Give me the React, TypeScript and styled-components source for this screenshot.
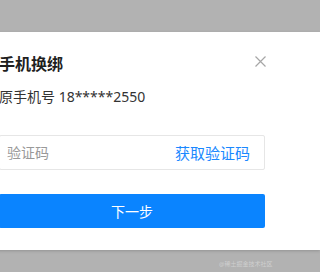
import React from 'react'
import styled, { createGlobalStyle } from 'styled-components'

const GlobalStyle = createGlobalStyle`
  html, body {
    margin: 0;
    padding: 0;
    min-height: 100%;
    overflow: hidden;
    background: #b2b2b2;
    font-family: "Noto Sans", "Noto Sans CJK SC", sans-serif;
  }
`

const Page = styled.div`
  position: relative;
  height: 100vh;
  padding-top: 32px;
  box-sizing: border-box;
  overflow: hidden;
`

const Modal = styled.div`
  margin-left: -17px;
  padding: 21px 0 22px 16px;
  background: #fff;
  box-shadow: 0 1px 3px rgba(0, 0, 0, 0.18);
`

const Content = styled.div`
  position: relative;
  width: 266px;
  display: flex;
  flex-direction: column;
`

const Title = styled.h2`
  margin: 0;
  font-size: 16px;
  line-height: 22px;
  font-weight: 700;
  color: #1f1f1f;
`

const Close = styled.button`
  position: absolute;
  top: 2px;
  right: -2px;
  width: 13px;
  height: 13px;
  padding: 0;
  border: 0;
  background: none;
  display: flex;
  align-items: center;
  justify-content: center;
`

const Phone = styled.p`
  margin: 12px 0 0;
  font-size: 14px;
  line-height: 20px;
  color: #333;
`

const Field = styled.div`
  margin-top: 28px;
  height: 35px;
  box-sizing: border-box;
  border: 1px solid #e6e6e6;
  border-radius: 2px;
  display: flex;
  align-items: center;
  justify-content: space-between;
  padding: 0 14px 0 7px;
`

const Input = styled.input`
  flex: 1;
  min-width: 0;
  border: 0;
  outline: none;
  font-family: inherit;
  font-size: 14px;
  color: #333;
  padding: 0;
  &::placeholder {
    color: #999;
  }
`

const SendCode = styled.span`
  font-size: 15px;
  color: #1a88ff;
  white-space: nowrap;
`

const NextButton = styled.button`
  margin-top: 24px;
  height: 34px;
  border: 0;
  border-radius: 2px;
  background: #0a84ff;
  color: #fff;
  font-family: inherit;
  font-size: 14px;
`

const Watermark = styled.span`
  position: absolute;
  left: 219px;
  top: 260px;
  font-size: 6px;
  line-height: 8px;
  color: #cfcfcf;
  white-space: nowrap;
`

const App: React.FC = () => {
  return (
    <>
      <GlobalStyle />
      <Page>
        <Modal>
          <Content>
            <Title>手机换绑</Title>
            <Close aria-label="关闭">
              <svg width="11" height="11" viewBox="0 0 11 11">
                <path d="M0.5 0.5 L10.5 10.5 M10.5 0.5 L0.5 10.5" stroke="#a6a6a6" strokeWidth="1.2" />
              </svg>
            </Close>
            <Phone>原手机号 18*****2550</Phone>
            <Field>
              <Input placeholder="验证码" />
              <SendCode>获取验证码</SendCode>
            </Field>
            <NextButton>下一步</NextButton>
          </Content>
        </Modal>
        <Watermark>@稀土掘金技术社区</Watermark>
      </Page>
    </>
  )
}

export default App
